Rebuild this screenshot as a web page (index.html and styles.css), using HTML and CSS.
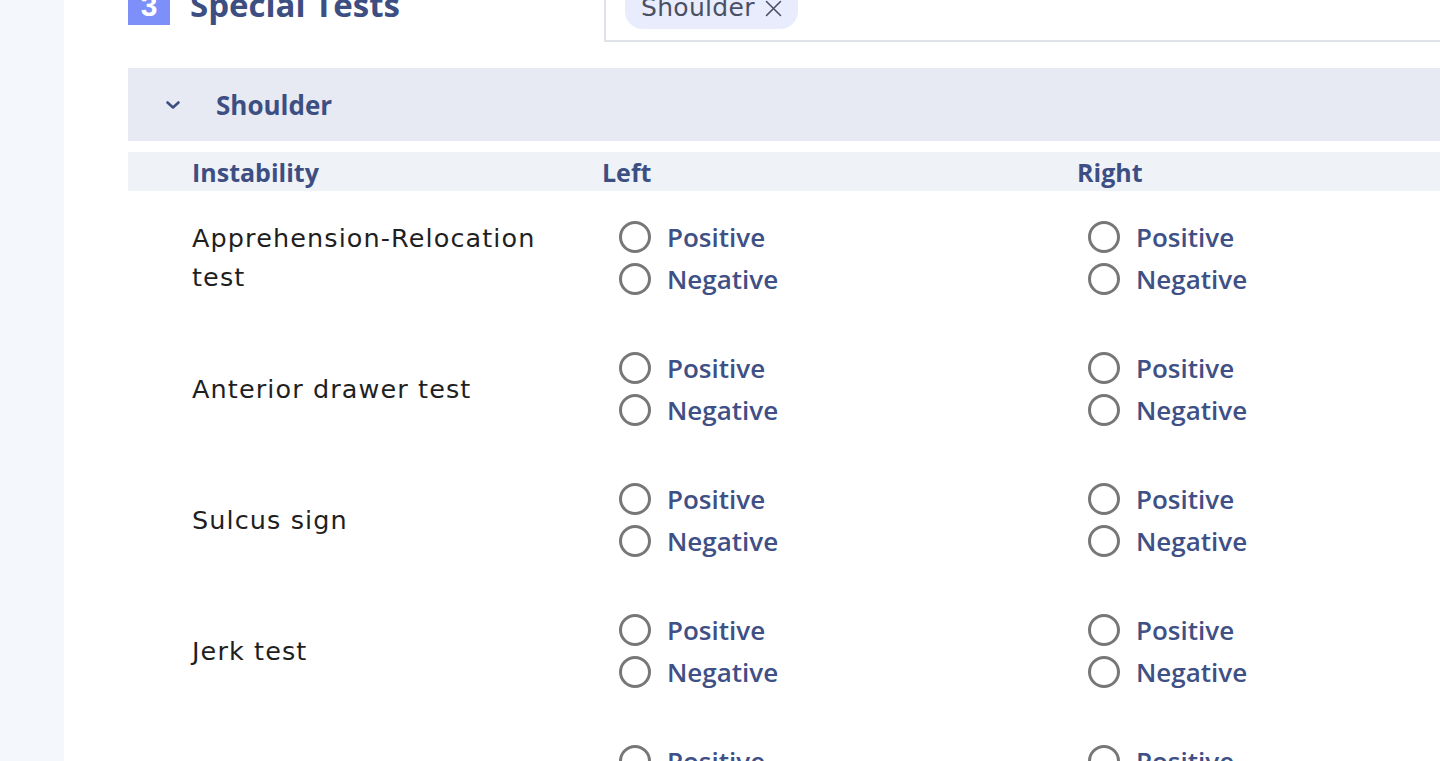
FILE: index.html
```html
<!DOCTYPE html>
<html lang="en">
<head>
<meta charset="utf-8">
<title>Special Tests</title>
<link rel="stylesheet" href="styles.css">
</head>
<body>
<div class="app">
  <aside class="sidebar"></aside>
  <main class="main">
    <div class="section-head">
      <div class="section-title">
        <span class="badge">3</span>
        <h2 class="title">Special Tests</h2>
      </div>
      <div class="select-box">
        <span class="chip">Shoulder<svg class="chip-x" width="17" height="17" viewBox="0 0 17 17"><path d="M1.5 1.5 L15.5 15.5 M15.5 1.5 L1.5 15.5" stroke="#4a5064" stroke-width="1.6" stroke-linecap="round"/></svg></span>
      </div>
    </div>

    <div class="group">
      <div class="group-bar">
        <svg class="chevron" width="16" height="10" viewBox="0 0 16 10"><path d="M2.5 2.5 L8 7.5 L13.5 2.5" fill="none" stroke="#3d4f82" stroke-width="2.6" stroke-linecap="round" stroke-linejoin="round"/></svg>
        <span class="group-name">Shoulder</span>
      </div>
      <div class="col-head">
        <span class="ch ch-name">Instability</span>
        <span class="ch ch-left">Left</span>
        <span class="ch ch-right">Right</span>
      </div>

      <div class="test-row">
        <div class="test-name">Apprehension-Relocation<br>test</div>
        <div class="radios"><label class="radio"><span class="circle"></span>Positive</label><label class="radio"><span class="circle"></span>Negative</label></div>
        <div class="radios"><label class="radio"><span class="circle"></span>Positive</label><label class="radio"><span class="circle"></span>Negative</label></div>
      </div>
      <div class="test-row">
        <div class="test-name">Anterior drawer test</div>
        <div class="radios"><label class="radio"><span class="circle"></span>Positive</label><label class="radio"><span class="circle"></span>Negative</label></div>
        <div class="radios"><label class="radio"><span class="circle"></span>Positive</label><label class="radio"><span class="circle"></span>Negative</label></div>
      </div>
      <div class="test-row">
        <div class="test-name">Sulcus sign</div>
        <div class="radios"><label class="radio"><span class="circle"></span>Positive</label><label class="radio"><span class="circle"></span>Negative</label></div>
        <div class="radios"><label class="radio"><span class="circle"></span>Positive</label><label class="radio"><span class="circle"></span>Negative</label></div>
      </div>
      <div class="test-row">
        <div class="test-name">Jerk test</div>
        <div class="radios"><label class="radio"><span class="circle"></span>Positive</label><label class="radio"><span class="circle"></span>Negative</label></div>
        <div class="radios"><label class="radio"><span class="circle"></span>Positive</label><label class="radio"><span class="circle"></span>Negative</label></div>
      </div>
      <div class="test-row">
        <div class="test-name"></div>
        <div class="radios"><label class="radio"><span class="circle"></span>Positive</label><label class="radio"><span class="circle"></span>Negative</label></div>
        <div class="radios"><label class="radio"><span class="circle"></span>Positive</label><label class="radio"><span class="circle"></span>Negative</label></div>
      </div>
    </div>
  </main>
</div>
</body>
</html>
```

FILE: styles.css
```css
* { box-sizing: border-box; }
html, body { margin: 0; padding: 0; height: 100%; overflow: hidden; background: #fff; }
body { font-family: "DejaVu Sans", "Open Sans", sans-serif; color: #222; }

.app { display: flex; height: 761px; overflow: hidden; }
.sidebar { width: 64px; flex: 0 0 64px; background: #f4f7fc; }
.main { flex: 0 0 1500px; padding-left: 64px; background: #fff; }

.section-head { display: flex; align-items: flex-end; height: 42px; }
.section-title { width: 476px; display: flex; align-items: flex-end; gap: 20px; height: 42px; padding-bottom: 17px; }
.badge { width: 42px; height: 40px; background: #7d8ff8; color: #fff; font-family: "Liberation Sans", sans-serif; font-weight: 700; font-size: 30px; display: flex; justify-content: center; align-items: flex-end; line-height: 1; padding-bottom: 4px; }
.title { margin: 0; font-family: "Open Sans", sans-serif; font-size: 33px; font-weight: 700; color: #3d4f82; line-height: 1; margin-bottom: 4px; }

.select-box { flex: 1; height: 80px; border-left: 2px solid #dfe2e8; border-bottom: 2px solid #dfe2e8; display: flex; align-items: flex-end; padding: 0 0 11px 19px; }
.chip { height: 50px; width: 173px; background: #e8ecfd; border-radius: 18px; padding: 0 0 7px 16px; display: inline-flex; align-items: flex-end; font-size: 25px; letter-spacing: 0.3px; color: #4a5064; }
.chip-x { margin-left: 10px; margin-bottom: 5px; }

.group { margin-top: 26px; width: 1440px; }
.group-bar { height: 73px; background: #e7eaf3; display: flex; align-items: center; padding-left: 37px; }
.chevron { margin-right: 35px; }
.group-name { font-family: "Open Sans", sans-serif; font-size: 26px; font-weight: 700; color: #3d4f82; }

.col-head { margin-top: 11px; height: 39px; background: #eff2f7; display: grid; grid-template-columns: 410px 475px 1fr; align-items: center; padding-left: 64px; }
.ch { font-family: "Open Sans", sans-serif; font-size: 25px; font-weight: 700; color: #3d4f82; }

.test-row { display: grid; grid-template-columns: 427px 469px 1fr; padding: 25px 0 22px 64px; align-items: center; }
.test-name { font-size: 25.5px; letter-spacing: 1.1px; line-height: 39px; color: #1f1f1f; }
.radios { display: flex; flex-direction: column; }
.radio { height: 42px; display: flex; align-items: center; gap: 16px; font-family: "Open Sans", sans-serif; font-size: 26px; font-weight: 600; color: #3e5085; }
.circle { width: 32px; height: 32px; border: 3px solid #777; border-radius: 50%; flex: 0 0 32px; }
```
